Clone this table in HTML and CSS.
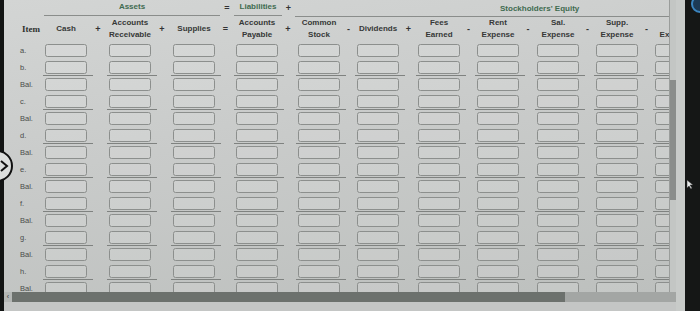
FILE: index.html
```html
<!DOCTYPE html>
<html>
<head>
<meta charset="utf-8">
<title>Transactions</title>
<link rel="stylesheet" href="styles.css">
</head>
<body>
<div class="screen">
  <div class="bezel-l"></div>
  <div class="app">
    <div class="viewport">
      <div class="content">
        <div class="groups">
          <div class="g-item"></div>
          <div class="g assets">Assets</div>
          <div class="g-op eq">=</div>
          <div class="g liab">Liabilities</div>
          <div class="g-op pl">+</div>
          <div class="g equity">Stockholders' Equity</div>
        </div>
        <div class="cols">
          <div class="h item">Item</div>
          <div class="h"><span class="op"></span><span class="lbl"><span>Cash</span></span></div>
          <div class="h"><span class="op">+</span><span class="lbl"><span>Accounts</span><span>Receivable</span></span></div>
          <div class="h"><span class="op">+</span><span class="lbl"><span>Supplies</span></span></div>
          <div class="h"><span class="op">=</span><span class="lbl"><span>Accounts</span><span>Payable</span></span></div>
          <div class="h"><span class="op">+</span><span class="lbl"><span>Common</span><span>Stock</span></span></div>
          <div class="h"><span class="op">-</span><span class="lbl"><span>Dividends</span></span></div>
          <div class="h"><span class="op">+</span><span class="lbl"><span>Fees</span><span>Earned</span></span></div>
          <div class="h"><span class="op">-</span><span class="lbl"><span>Rent</span><span>Expense</span></span></div>
          <div class="h"><span class="op">-</span><span class="lbl"><span>Sal.</span><span>Expense</span></span></div>
          <div class="h"><span class="op">-</span><span class="lbl"><span>Supp.</span><span>Expense</span></span></div>
          <div class="h"><span class="op">-</span><span class="lbl"><span>&nbsp;</span><span>Expense</span></span></div>
        </div>
        <div class="row"><span class="rl">a.</span><i></i><i></i><i></i><i></i><i></i><i></i><i></i><i></i><i></i><i></i><i></i></div>
        <div class="row u"><span class="rl">b.</span><i></i><i></i><i></i><i></i><i></i><i></i><i></i><i></i><i></i><i></i><i></i></div>
        <div class="row"><span class="rl">Bal.</span><i></i><i></i><i></i><i></i><i></i><i></i><i></i><i></i><i></i><i></i><i></i></div>
        <div class="row u"><span class="rl">c.</span><i></i><i></i><i></i><i></i><i></i><i></i><i></i><i></i><i></i><i></i><i></i></div>
        <div class="row"><span class="rl">Bal.</span><i></i><i></i><i></i><i></i><i></i><i></i><i></i><i></i><i></i><i></i><i></i></div>
        <div class="row u"><span class="rl">d.</span><i></i><i></i><i></i><i></i><i></i><i></i><i></i><i></i><i></i><i></i><i></i></div>
        <div class="row"><span class="rl">Bal.</span><i></i><i></i><i></i><i></i><i></i><i></i><i></i><i></i><i></i><i></i><i></i></div>
        <div class="row u"><span class="rl">e.</span><i></i><i></i><i></i><i></i><i></i><i></i><i></i><i></i><i></i><i></i><i></i></div>
        <div class="row"><span class="rl">Bal.</span><i></i><i></i><i></i><i></i><i></i><i></i><i></i><i></i><i></i><i></i><i></i></div>
        <div class="row u"><span class="rl">f.</span><i></i><i></i><i></i><i></i><i></i><i></i><i></i><i></i><i></i><i></i><i></i></div>
        <div class="row"><span class="rl">Bal.</span><i></i><i></i><i></i><i></i><i></i><i></i><i></i><i></i><i></i><i></i><i></i></div>
        <div class="row u"><span class="rl">g.</span><i></i><i></i><i></i><i></i><i></i><i></i><i></i><i></i><i></i><i></i><i></i></div>
        <div class="row"><span class="rl">Bal.</span><i></i><i></i><i></i><i></i><i></i><i></i><i></i><i></i><i></i><i></i><i></i></div>
        <div class="row u"><span class="rl">h.</span><i></i><i></i><i></i><i></i><i></i><i></i><i></i><i></i><i></i><i></i><i></i></div>
        <div class="row"><span class="rl">Bal.</span><i></i><i></i><i></i><i></i><i></i><i></i><i></i><i></i><i></i><i></i><i></i></div>
      </div>
      <div class="vscroll"><div class="vthumb"></div></div>
    </div>
    <div class="hbar"><div class="hbtn">‹</div><div class="hthumb"></div><div class="htrack"></div></div>
    <div class="foot"></div>
  </div>
  <div class="side"></div>
  <div class="bezel-r"></div>
</div>
<svg class="nav" width="16" height="36" viewBox="0 0 16 36"><circle cx="-3" cy="18" r="15" fill="#dcdedd" stroke="#111" stroke-width="2"/><path d="M1 13 L7 18 L1 23" fill="none" stroke="#111" stroke-width="2"/></svg>
<svg class="badge" width="12" height="14" viewBox="0 0 12 14"><circle cx="12" cy="4" r="8" fill="#1c3a55" stroke="#3b85bf" stroke-width="2"/></svg>
<svg class="cursor" width="8" height="10" viewBox="0 0 8 10"><path d="M1 0 L1 8 L3 6 L5 9 L6 8 L4 5 L7 5 Z" fill="#e8eaea" stroke="#333" stroke-width="0.5"/></svg>
</body>
</html>
```

FILE: styles.css
```css
html, body {
  margin: 0;
  padding: 0;
  width: 700px;
  height: 311px;
  overflow: hidden;
  background: #151716;
  font-family: "Liberation Sans", Arial, sans-serif;
}

.screen {
  display: flex;
  width: 700px;
  height: 311px;
}

.bezel-l {
  width: 4px;
  background: #121413;
}

.app {
  width: 672px;
  display: flex;
  flex-direction: column;
}

.viewport {
  height: 292px;
  display: flex;
}

.content {
  width: 665px;
  overflow: hidden;
  background: linear-gradient(172deg, #d3d5d4 0%, #c9cbca 45%, #bdc0be 100%);
}

.groups {
  display: flex;
  height: 16px;
  width: 900px;
  font-weight: bold;
  font-size: 8px;
  line-height: 12px;
}

.g-item { width: 40px; }

.g {
  color: #3f6b50;
  text-align: center;
  border-bottom: 1.5px solid #8a8d8b;
  padding-top: 1px;
  box-sizing: border-box;
  height: 15.5px;
}

.assets { width: 176px; }
.liab { width: 48px; }
.equity {
  width: 520px;
  text-align: left;
  padding-left: 205px;
  padding-top: 3px;
  height: 17px;
}

.g-op {
  color: #333;
  text-align: center;
  padding-top: 2px;
  font-size: 9px;
}
.eq { width: 14px; }
.pl { width: 13px; }

.cols,
.row {
  display: grid;
  grid-template-columns: 41px 42px 64px 64px 63px 62px 59px 61px 59px 60px 59px 59px;
  width: max-content;
}

.cols {
  height: 26px;
  margin-bottom: 2px;
  font-size: 8px;
  font-weight: bold;
  color: #363837;
  line-height: 12px;
}

.h {
  display: grid;
  grid-template-columns: 1fr 42px;
  align-items: center;
}

.h.item {
  display: block;
  padding-left: 18px;
  padding-top: 7px;
  font-family: "Liberation Serif", "Times New Roman", serif;
  font-size: 9px;
  color: #2e302f;
}

.op {
  text-align: center;
  font-size: 9px;
  color: #333;
}

.lbl {
  display: flex;
  flex-direction: column;
  align-items: center;
  white-space: nowrap;
}

.row {
  height: 17px;
  align-items: start;
}

.rl {
  padding-left: 16px;
  font-size: 7.5px;
  line-height: 13px;
  color: #4a4c4b;
}

.row i {
  justify-self: end;
  display: block;
  width: 42px;
  height: 13px;
  box-sizing: border-box;
  border: 1.5px solid #8c8f8d;
  border-radius: 2.5px;
  background: rgba(255, 255, 255, 0.13);
}

.row.u i::after {
  content: "";
  display: block;
  height: 1.5px;
  background: #7f8280;
  margin: 12.5px -6.5px 0 -3.5px;
}

.vscroll {
  width: 7px;
  background: #c3c6c4;
  border-left: 1px solid #9a9d9b;
  box-sizing: border-box;
  padding-top: 80px;
}

.vthumb {
  height: 120px;
  background: #8a8d8b;
}

.hbar {
  height: 10px;
  display: flex;
}

.hbtn {
  width: 8px;
  background: #b4b7b5;
  color: #333;
  font-size: 7px;
  line-height: 10px;
  text-align: center;
}

.hthumb {
  width: 553px;
  background: #6c716d;
}

.htrack {
  flex: 1;
  background: #a3a6a4;
}

.foot {
  flex: 1;
  background: #c4c6c5;
}

.side {
  width: 9px;
  background: #c8cbc9;
}

.bezel-r {
  width: 15px;
  background: #151716;
}

.nav {
  position: absolute;
  left: 0;
  top: 148px;
}

.badge {
  position: absolute;
  left: 688px;
  top: 0;
}

.cursor {
  position: absolute;
  left: 686px;
  top: 180px;
}
```
